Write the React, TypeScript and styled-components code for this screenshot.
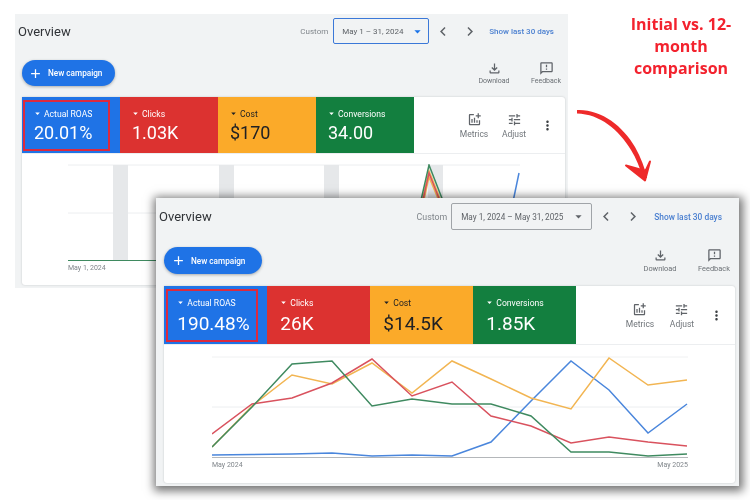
import React from "react";
import styled, { createGlobalStyle } from "styled-components";
import {
  MdAdd,
  MdArrowDropDown,
  MdChevronLeft,
  MdChevronRight,
  MdMoreVert,
  MdOutlineAddchart,
  MdOutlineFeedback,
  MdOutlineFileDownload,
  MdOutlineTune,
} from "react-icons/md";

const Global = createGlobalStyle`
  html, body { margin: 0; padding: 0; background: #fff; }
  body { font-family: Roboto, "Liberation Sans", sans-serif; }
`;

const Canvas = styled.div`
  position: relative;
  width: 750px;
  height: 500px;
  overflow: hidden;
  background: #fff;
  filter: blur(0.35px);
`;

const Panel = styled.section<{ $front?: boolean }>`
  position: absolute;
  left: ${(p) => (p.$front ? 156 : 15)}px;
  top: ${(p) => (p.$front ? 198 : 14)}px;
  width: ${(p) => (p.$front ? 583 : 553)}px;
  height: ${(p) => (p.$front ? 288 : 274)}px;
  display: flex;
  flex-direction: column;
  background: #f1f3f4;
  box-shadow: ${(p) => (p.$front ? "1px 2px 9px 3px rgba(0,0,0,.55)" : "none")};
`;

const Header = styled.header<{ $front?: boolean }>`
  display: flex;
  align-items: center;
  height: ${(p) => (p.$front ? 27 : 26)}px;
  margin-top: ${(p) => (p.$front ? 5 : 4)}px;
  padding: ${(p) => (p.$front ? "0 17px 0 3px" : "0 14px 0 3px")};
`;

const Title = styled.h1`
  margin: 0;
  font-size: 13px;
  font-weight: 400;
  color: #303337;
`;

const CustomLabel = styled.span<{ $front?: boolean }>`
  margin-left: auto;
  margin-right: ${(p) => (p.$front ? 4 : 5)}px;
  font-size: ${(p) => (p.$front ? 8.8 : 8)}px;
  color: #80868b;
`;

const DateBox = styled.div<{ $front?: boolean }>`
  display: flex;
  align-items: center;
  justify-content: space-between;
  box-sizing: border-box;
  width: ${(p) => (p.$front ? 141 : 96)}px;
  height: 100%;
  padding: ${(p) => (p.$front ? "0 5px 0 9px" : "0 3px 0 8px")};
  border: 1px solid ${(p) => (p.$front ? "#a0a4a8" : "#3b78d8")};
  border-radius: 2px;
  font-size: ${(p) => (p.$front ? 8.2 : 8)}px;
  color: #5f6368;
  white-space: nowrap;
  & svg { font-size: 15px; color: ${(p) => (p.$front ? "#5f6368" : "#1a73e8")}; }
`;

const NavButton = styled.span<{ $front?: boolean }>`
  display: flex;
  align-items: center;
  justify-content: center;
  width: 18px;
  height: 18px;
  margin-left: 5px;
  font-size: 19px;
  color: #5f6368;
  & + & { margin-left: ${(p) => (p.$front ? 9 : 8)}px; }
`;

const ShowLink = styled.a<{ $front?: boolean }>`
  margin-left: ${(p) => (p.$front ? 12 : 10)}px;
  font-size: ${(p) => (p.$front ? 8.4 : 8)}px;
  font-weight: 500;
  color: #4a7fd0;
  white-space: nowrap;
`;

const ActionRow = styled.div<{ $front?: boolean }>`
  display: flex;
  align-items: center;
  height: ${(p) => (p.$front ? 27 : 26)}px;
  margin-top: ${(p) => (p.$front ? 17 : 16)}px;
  padding: ${(p) => (p.$front ? "0 3px 0 8px" : "0 2px 0 7px")};
`;

const NewButton = styled.button<{ $front?: boolean }>`
  display: flex;
  align-items: center;
  gap: 5px;
  box-sizing: border-box;
  width: ${(p) => (p.$front ? 98 : 93)}px;
  height: 100%;
  padding: 0 0 0 ${(p) => (p.$front ? 7 : 6)}px;
  border: 0;
  border-radius: 14px;
  background: #1f73e6;
  box-shadow: 0 1px 3px rgba(60, 64, 67, 0.4);
  font-family: inherit;
  font-size: 8.2px;
  font-weight: 500;
  color: #fff;
  white-space: nowrap;
  & svg { font-size: 15px; flex: none; }
`;

const TopTools = styled.div<{ $front?: boolean }>`
  display: flex;
  margin-left: auto;
  gap: ${(p) => (p.$front ? 10 : 12)}px;
`;

const TopTool = styled.div<{ $front?: boolean }>`
  display: flex;
  flex-direction: column;
  align-items: center;
  width: ${(p) => (p.$front ? 44 : 40)}px;
  font-size: ${(p) => (p.$front ? 7.4 : 7)}px;
  color: #6b7075;
  white-space: nowrap;
  & svg { font-size: 15px; color: #5f6368; margin-bottom: 1px; }
`;

const Card = styled.div<{ $front?: boolean }>`
  display: flex;
  flex-direction: column;
  flex: none;
  width: ${(p) => (p.$front ? 570.7 : 543)}px;
  height: ${(p) => (p.$front ? 197 : 188)}px;
  margin: ${(p) => (p.$front ? "12px 0 0 8.3px" : "11px 0 0 7px")};
  background: #fff;
  border-radius: 0 3px 3px 3px;
  box-shadow: 0 0 2px rgba(60, 64, 67, 0.25);
`;

const TileBar = styled.div<{ $front?: boolean }>`
  display: flex;
  flex: none;
  height: ${(p) => (p.$front ? 58 : 56)}px;
  border-bottom: 1px solid #eceef0;
  box-sizing: content-box;
`;

const Tile = styled.div<{ $bg: string; $dark?: boolean; $front?: boolean }>`
  position: relative;
  display: flex;
  flex-direction: column;
  flex: none;
  box-sizing: border-box;
  width: ${(p) => (p.$front ? 103 : 98)}px;
  padding: ${(p) => (p.$front ? "11px 0 0 13px" : "11px 0 0 12px")};
  background: ${(p) => p.$bg};
  color: ${(p) => (p.$dark ? "#202124" : "#fff")};
`;

const TileLabel = styled.div`
  display: flex;
  align-items: center;
  height: 11px;
  font-size: 8.6px;
  font-weight: 400;
  white-space: nowrap;
  & svg { font-size: 11px; margin: 0 1px 0 -2px; flex: none; }
`;

const TileValue = styled.div<{ $front?: boolean }>`
  margin-top: ${(p) => (p.$front ? 5 : 3)}px;
  font-size: ${(p) => (p.$front ? 19 : 18)}px;
  line-height: 21px;
  white-space: nowrap;
`;

const Highlight = styled.span<{ $front?: boolean }>`
  position: absolute;
  left: ${(p) => (p.$front ? 2 : 1)}px;
  top: 3px;
  width: ${(p) => (p.$front ? 92 : 87)}px;
  height: ${(p) => (p.$front ? 53 : 51)}px;
  box-sizing: border-box;
  border: 2px solid #dc2a3e;
`;

const CardTools = styled.div<{ $front?: boolean }>`
  display: flex;
  align-items: center;
  margin-left: auto;
  padding-right: ${(p) => (p.$front ? 4 : 5)}px;
`;

const CardTool = styled.div<{ $front?: boolean }>`
  display: flex;
  flex-direction: column;
  align-items: center;
  width: ${(p) => (p.$front ? 42 : 40)}px;
  font-size: 8.5px;
  color: #70757a;
  & svg { font-size: 15px; color: #5f6368; margin-bottom: 2px; }
`;

const Kebab = styled.span<{ $front?: boolean }>`
  display: flex;
  justify-content: center;
  width: ${(p) => (p.$front ? 28 : 26)}px;
  font-size: 15px;
  color: #3c4043;
`;

const ChartBox = styled.div<{ $front?: boolean }>`
  display: flex;
  flex-direction: column;
  padding: ${(p) => (p.$front ? "11px 47px 0 47.7px" : "10px 45px 0 46px")};
`;

const ChartSvg = styled.svg`
  display: block;
  width: 100%;
  flex: none;
`;

const AxisRow = styled.div`
  display: flex;
  justify-content: space-between;
  margin-top: 3px;
  font-size: 7px;
  color: #80868b;
`;

const Note = styled.div`
  position: absolute;
  left: 611px;
  top: 13px;
  width: 140px;
  font-family: "Open Sans", "Noto Sans", sans-serif;
  font-size: 16px;
  font-weight: 700;
  line-height: 22px;
  text-align: center;
  color: #f3222e;
`;

const ArrowSvg = styled.svg`
  position: absolute;
  left: 570px;
  top: 105px;
  width: 90px;
  height: 85px;
`;

const xs = [212, 252, 292, 332, 372, 412, 452, 491, 531, 571, 609, 648, 687];
const toPts = (ys: number[]) => ys.map((y, i) => `${xs[i]},${y}`).join(" ");

const frontSeries = [
  { c: "#4a86dc", y: [454, 453.5, 453, 452, 455, 454, 455, 441, 400, 360, 389, 432, 403] },
  { c: "#f2b552", y: [446, 405, 374, 383, 362, 392, 360, 378, 397, 408, 357, 384, 379] },
  { c: "#d9525e", y: [433, 403, 397, 382, 358, 395, 381, 415, 425, 442, 436, 441, 445] },
  { c: "#3f8a60", y: [446, 406, 363, 360, 405, 398, 403, 403, 415, 451, 451, 455, 453] },
];

const DownIcon = () => <MdArrowDropDown />;

type TileData = { label: string; value: string; bg: string; dark?: boolean; mark?: boolean };

const tilesFor = (v: string[]): TileData[] => [
  { label: "Actual ROAS", value: v[0], bg: "#1f73e6", mark: true },
  { label: "Clicks", value: v[1], bg: "#dc3230" },
  { label: "Cost", value: v[2], bg: "#fbaa29", dark: true },
  { label: "Conversions", value: v[3], bg: "#137f3f" },
];

const Dashboard = ({
  front,
  dateText,
  values,
  chart,
  axis,
}: {
  front?: boolean;
  dateText: string;
  values: string[];
  chart: React.ReactNode;
  axis: string[];
}) => (
  <Panel $front={front}>
    <Header $front={front}>
      <Title>Overview</Title>
      <CustomLabel $front={front}>Custom</CustomLabel>
      <DateBox $front={front}>
        {dateText}
        <DownIcon />
      </DateBox>
      <NavButton $front={front}>
        <MdChevronLeft />
      </NavButton>
      <NavButton $front={front}>
        <MdChevronRight />
      </NavButton>
      <ShowLink $front={front}>Show last 30 days</ShowLink>
    </Header>
    <ActionRow $front={front}>
      <NewButton $front={front}>
        <MdAdd />
        New campaign
      </NewButton>
      <TopTools $front={front}>
        <TopTool $front={front}>
          <MdOutlineFileDownload />
          Download
        </TopTool>
        <TopTool $front={front}>
          <MdOutlineFeedback />
          Feedback
        </TopTool>
      </TopTools>
    </ActionRow>
    <Card $front={front}>
      <TileBar $front={front}>
        {tilesFor(values).map((t) => (
          <Tile key={t.label} $bg={t.bg} $dark={t.dark} $front={front}>
            {t.mark && <Highlight $front={front} />}
            <TileLabel>
              <DownIcon />
              {t.label}
            </TileLabel>
            <TileValue $front={front}>{t.value}</TileValue>
          </Tile>
        ))}
        <CardTools $front={front}>
          <CardTool $front={front}>
            <MdOutlineAddchart />
            Metrics
          </CardTool>
          <CardTool $front={front}>
            <MdOutlineTune />
            Adjust
          </CardTool>
          <Kebab $front={front}>
            <MdMoreVert />
          </Kebab>
        </CardTools>
      </TileBar>
      <ChartBox $front={front}>
        {chart}
        <AxisRow>
          {axis.map((a) => (
            <span key={a}>{a}</span>
          ))}
        </AxisRow>
      </ChartBox>
    </Card>
  </Panel>
);

const BackChart = () => (
  <ChartSvg viewBox="68 163 452 97" height={97}>
    <line x1="68" x2="520" y1="164" y2="164" stroke="#eceef0" />
    <line x1="68" x2="520" y1="212" y2="212" stroke="#eceef0" />
    {[113, 219, 324, 428].map((x) => (
      <rect key={x} x={x} y={164} width={15} height={95} fill="#e6e8ea" />
    ))}
    <line x1="68" x2="520" y1="259.5" y2="259.5" stroke="#3f8a60" />
    <polyline points="415,230 429,170 441,200" fill="none" stroke="#f2b552" strokeWidth="1.5" />
    <polyline points="417,230 429,176 439,200" fill="none" stroke="#f2b552" strokeWidth="1.5" />
    <polyline points="416,230 429,172 440,200" fill="none" stroke="#d9525e" strokeWidth="1.5" />
    <polyline points="414,230 429,164 443,200" fill="none" stroke="#3f8a60" strokeWidth="1.5" />
    <polyline points="510,215 519,172" fill="none" stroke="#4a86dc" strokeWidth="1.5" />
  </ChartSvg>
);

const FrontChart = () => (
  <ChartSvg viewBox="212 355 476 102" height={102}>
    <line x1="212" x2="688" y1="356" y2="356" stroke="#f0f1f2" />
    <line x1="212" x2="688" y1="406" y2="406" stroke="#eceef0" />
    <line x1="212" x2="688" y1="456.5" y2="456.5" stroke="#b4b7ba" />
    {frontSeries.map((s) => (
      <polyline key={s.c} points={toPts(s.y)} fill="none" stroke={s.c} strokeWidth="1.5" />
    ))}
  </ChartSvg>
);

export default function App() {
  return (
    <>
      <Global />
      <Canvas>
        <Dashboard
          dateText="May 1 – 31, 2024"
          values={["20.01%", "1.03K", "$170", "34.00"]}
          chart={<BackChart />}
          axis={["May 1, 2024"]}
        />
        <Note>
          Initial vs. 12-
          <br />
          month
          <br />
          comparison
        </Note>
        <ArrowSvg viewBox="570 105 90 85">
          <path
            d="M577 110C601 109 623 126 635 147C641 158 645 168 647 178L643 178C640 168 636 158 631 150C619 130 600 114 577 113.500Z"
            fill="#ee2a2a"
          />
          <path d="M626 165.500L645 180.500L650 161.500L645.500 171Z" fill="#ee2a2a" stroke="#ee2a2a" strokeWidth="2" strokeLinejoin="round" />
        </ArrowSvg>
        <Dashboard
          front
          dateText="May 1, 2024 – May 31, 2025"
          values={["190.48%", "26K", "$14.5K", "1.85K"]}
          chart={<FrontChart />}
          axis={["May 2024", "May 2025"]}
        />
      </Canvas>
    </>
  );
}
